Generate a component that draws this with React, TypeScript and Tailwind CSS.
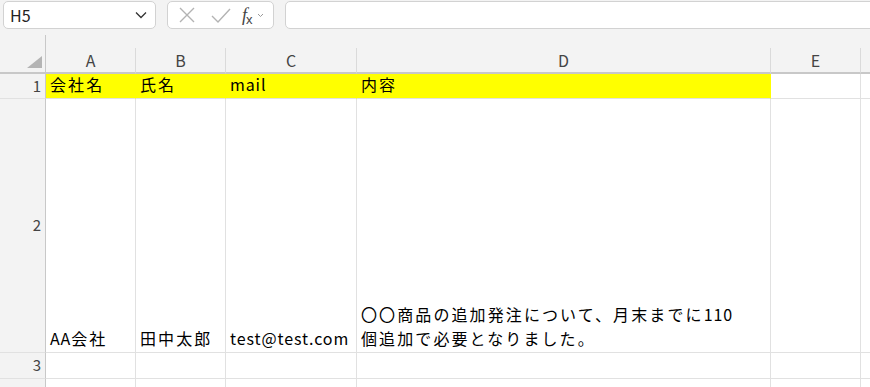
import React from "react";

const cols = [
  { name: "A", w: "w-[90px]" },
  { name: "B", w: "w-[90px]" },
  { name: "C", w: "w-[131px]" },
  { name: "D", w: "w-[414px]" },
  { name: "E", w: "w-[90px]" },
  { name: "", w: "w-[90px]" },
];

const font = "font-['Noto_Sans_CJK_JP','Noto_Sans',sans-serif]";

function Cell({
  w,
  yellow,
  children,
}: {
  w: string;
  yellow?: boolean;
  children?: React.ReactNode;
}) {
  return (
    <div
      className={`${w} shrink-0 h-full flex items-end pl-[4px] pb-[2px] border-b border-r border-[#e1e1e1] ${
        yellow ? "bg-[#ffff00] border-r-[#ffff00]" : "bg-white"
      } text-[16px] tracking-[2.1px] text-black whitespace-nowrap leading-[24px]`}
    >
      {children}
    </div>
  );
}

function Lat({ children }: { children: React.ReactNode }) {
  return <span className="tracking-[0.9px]">{children}</span>;
}

function RowHead({ n }: { n?: string }) {
  return (
    <div className="w-[46px] shrink-0 h-full flex items-center justify-end pr-[4px] border-r border-b border-r-[#c8c8c8] border-b-[#e1e1e1] bg-[#f3f3f3] text-[15px] text-[#444]">
      {n}
    </div>
  );
}

export default function App() {
  return (
    <div className={`w-[870px] h-[387px] overflow-hidden bg-[#f3f3f3] ${font}`}>
      {/* formula bar */}
      <div className="h-[35px] flex items-start pt-[1px] pl-[3px] gap-[11px]">
        <div className="w-[153px] h-[28px] bg-white border border-[#d2d2d2] rounded-[5px] flex items-center justify-between pl-[6px] pr-[8px] shrink-0">
          <span className="text-[16px] text-[#222]">H5</span>
          <svg width="12" height="8" viewBox="0 0 12 8">
            <path d="M1 1.5 L6 6.5 L11 1.5" fill="none" stroke="#333" strokeWidth="1.3" />
          </svg>
        </div>
        <div className="w-[107px] h-[28px] bg-white border border-[#d2d2d2] rounded-[5px] flex items-center pl-[10px] shrink-0">
          <svg width="18" height="18" viewBox="0 0 18 18">
            <path d="M2 2 L16 16 M16 2 L2 16" stroke="#b3b3b3" strokeWidth="1.4" />
          </svg>
          <svg width="22" height="18" viewBox="0 0 22 18" className="ml-[14px]">
            <path d="M2 10 L8 16 L20 3" fill="none" stroke="#b3b3b3" strokeWidth="1.4" />
          </svg>
          <span className="ml-[10px] text-[#444] leading-none flex items-end">
            <span className="font-['Liberation_Serif',serif] italic text-[18px]">f</span>
            <span className="font-['Liberation_Sans',sans-serif] text-[13px] -ml-[1px] translate-y-[2px]">x</span>
          </span>
          <svg width="7" height="5" viewBox="0 0 7 5" className="ml-[4px]">
            <path d="M1 1 L3.5 3.5 L6 1" fill="none" stroke="#999" strokeWidth="1" />
          </svg>
        </div>
        <div className="flex-1 h-[28px] bg-white border border-[#d2d2d2] rounded-l-[5px] -mr-[10px]" />
      </div>

      {/* column headers */}
      <div className="h-[39px] flex">
        <div className="w-[46px] shrink-0 h-full border-r border-[#c8c8c8] border-b-2 border-b-[#c8c8c8] relative">
          <svg width="15" height="12" viewBox="0 0 15 12" className="absolute left-[27px] top-[21px]">
            <path d="M15 0 L15 12 L0 12 Z" fill="#b4b4b4" />
          </svg>
        </div>
        {cols.map((c, i) => (
          <div key={i} className={`${c.w} shrink-0 h-full flex flex-col`}>
            <div className="h-[13px]" />
            <div className="flex-1 flex items-center justify-center border-r border-[#dadada] border-b-2 border-b-[#c8c8c8] text-[16px] text-[#444]">
              {c.name}
            </div>
          </div>
        ))}
      </div>

      {/* row 1 */}
      <div className="h-[25px] flex">
        <RowHead n="1" />
        <Cell w="w-[90px]" yellow>会社名</Cell>
        <Cell w="w-[90px]" yellow>氏名</Cell>
        <Cell w="w-[131px]" yellow><Lat>mail</Lat></Cell>
        <Cell w="w-[414px]" yellow>内容</Cell>
        <Cell w="w-[90px]" />
        <Cell w="w-[90px]" />
      </div>

      {/* row 2 */}
      <div className="h-[254px] flex">
        <RowHead n="2" />
        <Cell w="w-[90px]"><Lat>AA</Lat>会社</Cell>
        <Cell w="w-[90px]">田中太郎</Cell>
        <Cell w="w-[131px]"><Lat>test@test.com</Lat></Cell>
        <Cell w="w-[414px]">
          <div className="flex flex-col">
            <span>〇〇商品の追加発注について、月末までに<Lat>110</Lat></span>
            <span>個追加で必要となりました。</span>
          </div>
        </Cell>
        <Cell w="w-[90px]" />
        <Cell w="w-[90px]" />
      </div>

      {/* row 3 */}
      <div className="h-[26px] flex">
        <RowHead n="3" />
        {cols.map((c, i) => (
          <Cell key={i} w={c.w} />
        ))}
      </div>

      {/* row 4 */}
      <div className="h-[26px] flex">
        <RowHead />
        {cols.map((c, i) => (
          <Cell key={i} w={c.w} />
        ))}
      </div>
    </div>
  );
}
